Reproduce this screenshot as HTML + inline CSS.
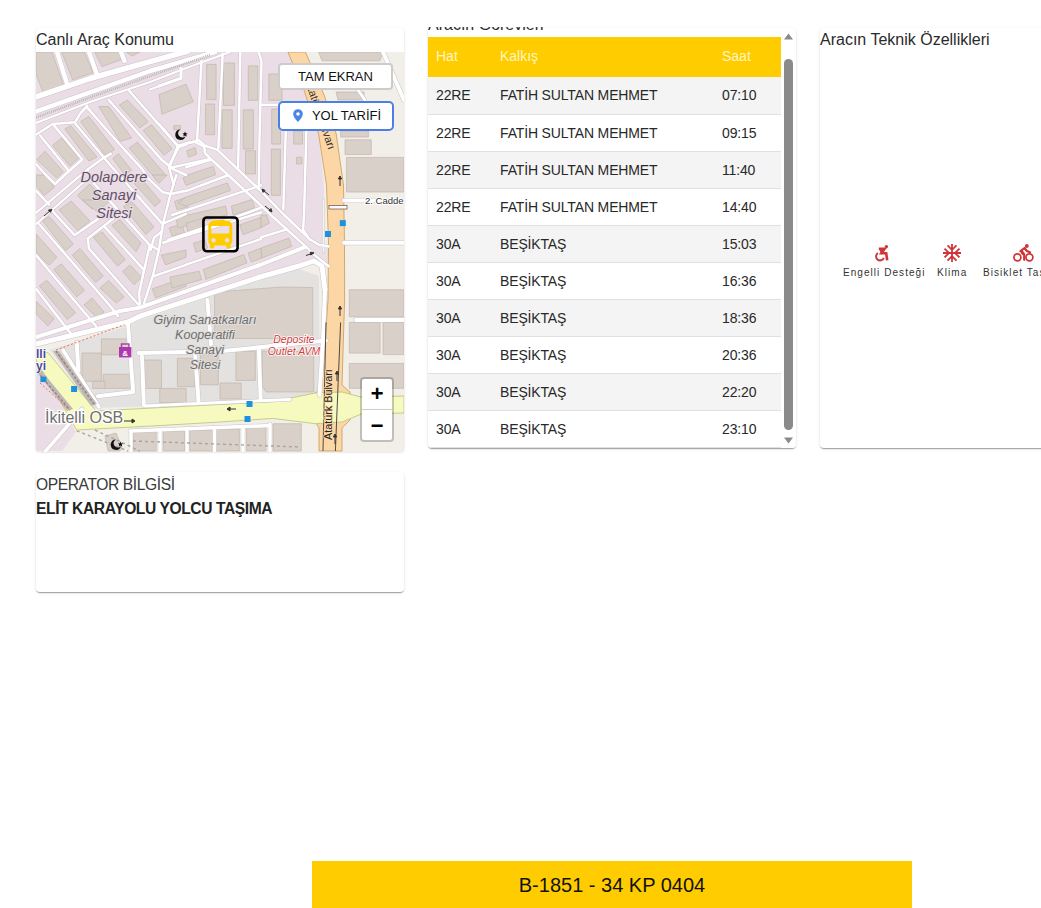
<!DOCTYPE html>
<html><head><meta charset="utf-8">
<style>
*{box-sizing:border-box;margin:0;padding:0}
html,body{width:1041px;height:908px;overflow:hidden;background:#fff;font-family:"Liberation Sans",sans-serif;color:rgba(0,0,0,.87)}
.card{position:absolute;background:#fff;border-radius:4px;box-shadow:0 2px 1px -1px rgba(0,0,0,.2),0 1px 1px 0 rgba(0,0,0,.14),0 1px 3px 0 rgba(0,0,0,.12);overflow:hidden}
.ttl{position:absolute;font-size:16px;white-space:nowrap;color:#2a2a2a}
#c1{left:36px;top:28px;width:368px;height:423px;overflow:visible}
#map{position:absolute;left:0;top:24px;width:368px;height:400px;overflow:hidden;background:#ebdbe8}
#c2{left:428px;top:28px;width:368px;height:420px}
#c3{left:820px;top:28px;width:368px;height:420px}
#c4{left:36px;top:472px;width:368px;height:120px}
table{border-collapse:collapse;position:absolute;left:0;top:9px;width:353px;font-size:14px}
th{background:#ffcc00;color:#fff6c0;font-weight:normal;text-align:left;height:40px;padding:0 0 2px 8px}
td{height:37px;padding:0 0 0 8px;border-bottom:1px solid #e0e0e0;color:#282828;letter-spacing:-.15px}
td:nth-child(2){padding-left:9px}
tr.o td{background:#f4f4f4}
.sb{position:absolute;left:353px;top:0;width:15px;height:420px;background:#fff}
.feat{position:absolute;top:216px;font-size:10px;letter-spacing:1.05px;color:#333;white-space:nowrap}
.btn{position:absolute;background:#fff;border-radius:4px;font-size:13px;color:#111;text-align:center}
#bar{position:absolute;left:312px;top:861px;width:600px;height:60px;background:#ffcc00;font-size:20px;color:#111;text-align:center;line-height:48px}
</style></head><body>

<div class="card" id="c1">
  <div class="ttl" style="left:0;top:3px">Canlı Araç Konumu</div>
  <div id="map">
    <svg id="msvg" width="368" height="400" viewBox="36 52 368 400" style="position:absolute;left:0;top:0">
<defs>
<style>
.b{fill:#d9d0c9;stroke:#c3b6ab;stroke-width:.7}
.w{fill:none;stroke:#fff;stroke-linecap:round;stroke-linejoin:round}
.lbl{font-family:"Liberation Sans",sans-serif;font-style:italic}
</style>
</defs>
<rect x="36" y="52" width="368" height="400" fill="#f2efe9"/>
<!-- industrial pink -->
<path d="M36 52H289L304 90L318.6 134L324 185L324 245L322 256L300 262L260 275L140 315L128 320L36 342Z" fill="#ebdde6"/>
<!-- gray area -->
<path d="M50 350L128 326L140 320L260 280L299 269L318.8 276.1L320 398L282 401L159 406L93 408Z" fill="#e3e2e1"/>
<!-- pink bottom-left -->
<path d="M36 360L76 432L62 451H36Z" fill="#ebdde6"/>
<!-- road D pedestrian fill -->
<path d="M198.4 140L205 145.8L217.4 149.9L261 191.2L284.1 215L310.6 239.8L318.8 244.7L328.7 246.4L328.7 266.2L313.9 254.6L305.6 246.4L270.9 215L261 205.3L210.8 159L205 153.2L204.2 146.6L194.3 141.7L186 143.3Z" fill="#eae0e6"/>

<!-- ===== buildings ===== -->
<g class="b">
<!-- top strip -->
<path d="M36 52H52L63.8 85.7L43.3 93L36 74Z"/>
<path d="M61.6 52H84.3L93.1 72.5L72.6 79.8Z"/>
<path d="M94.6 52H119.5L122.4 59.3L101.9 66.6Z"/>
<path d="M126 52H140L132 56Z"/>
<!-- left region block 1 -->
<path d="M52.5 145.4L61.6 138L79 157.8L69.9 166.1Z"/>
<path d="M64.9 128.9L70.7 125.6L97.1 157L88.9 161.1Z"/>
<path d="M80.6 121.5L88.9 116.5L114.5 149.6L105.4 155.3Z"/>
<path d="M98.8 106.6L108.7 106.6L131.8 138L120.3 141.3Z"/>
<path d="M36.8 159.5L45.1 151.2L63.3 171.9L56.6 178Z"/>
<path d="M119.3 105L127.5 100L148.2 121.5L139.9 128.1Z"/>

<path d="M143.2 130.6L151.5 124.8L172.1 148.7L163.9 155.3Z"/>
<path d="M129.2 147.9L137.4 142.1L165.5 175L157.3 181Z"/>
<path d="M112.7 158.6L118.4 153.7L131.6 170.2L125 175Z"/>
<path d="M159 94.5L186.1 84.2L193.4 101.8L161.9 114.2Z"/>
<path d="M173.8 125.6H180.4V129.7H173.8Z"/>
<!-- left region block 2 -->
<path d="M36 175H46L54.2 187.4L44.3 195.6L36 186Z"/>
<path d="M42.6 221L49.2 216.5L73.4 244L65.7 250.7Z"/>
<path d="M59.1 209.9L71.2 201.1L90 221L77.8 230.8Z"/>
<path d="M77.3 195.6L89.7 184.1L104 199L92 209Z"/>
<path d="M36 234.1L56.9 257.3L49.2 265L36 252.9Z"/>
<path d="M72.3 255L80 248.5L103.2 276L95.5 282.6Z"/>
<path d="M53.6 269.4L61.3 263.9L84.5 290.3L76.7 296.9Z"/>
<path d="M93.3 237.4L102.1 231.9L125.2 259.5L117.5 266.1Z"/>
<path d="M99.9 288.1L108.7 280.4L124.1 296.9L116.4 303Z"/>
<path d="M39.3 285.9L47 280.4L75.6 312.8L67.4 319.4Z"/>
<path d="M122.6 271.5L130 264.9L141.6 277.3L134.1 284.7Z"/>
<path d="M112 225.3L119.7 219.8L141 243L136 251.8Z"/>
<path d="M82.3 200H110.9L97.7 212Z"/>
<path d="M134.1 183.3L142.4 180L160.6 201.4L154.8 206.4Z"/>
<path d="M123.4 206.4L131.6 201.4L154 227L145.7 234.5Z"/>
<path d="M152.3 175H167.2L158.9 183.3Z"/>
<path d="M174.6 201.4L186 197.3L188 207L177 209.7Z"/>
<path d="M169.2 227.9L182 223.7L184.5 232.8L172.1 236.1Z"/>
<path d="M36 301.2L54.2 318.6L48 326L36 314Z"/>
<path d="M161.4 255L186 250L186 257.4L165.5 264.9Z"/>
<path d="M152.3 288.8L186 277.3L186 286.3L155.6 297.9Z"/>
<path d="M84 305L92 298L104 312L97 318Z"/>
<!-- triangle -->
<path d="M186.8 150.7L195.1 147.4L196.7 154L188.5 157.3Z"/>
<path d="M186 175.5L213.3 166.4L215.7 174.7L186 185.4L183 178Z"/>
<path d="M186 197L227.3 183L230.6 190.4L186 206.1L178 203Z"/>
<path d="M231.4 206.1L252.1 199.5L254.6 207.7L233.1 215Z"/>
<path d="M176 218L225.6 206.1L227.3 215L178 228Z"/>
<path d="M186 223.3L202.5 218.3L205 226.6L187.7 231.5Z"/>
<path d="M239.7 224.9L261 217.5L262 227.4L243 234.8Z"/>
<path d="M193.4 243.1L205 239.8L207.5 248L195.9 252.2Z"/>
<path d="M203.3 269.5L243.8 254.6L247.1 262.9L205.8 279.4Z"/>
<path d="M170 277L199.2 271.2L201.7 279.4L172 288Z"/>
<path d="M248 253L261 248L262 258L251.3 262.1Z"/>
<path d="M261 248L289.1 238.1L291.6 246.4L262 258Z"/>
<path d="M261 215L266.8 215L269.3 223.3L261 227.4Z"/>
<!-- T2 tall narrow buildings -->
<path d="M206.6 64.4H216.1V99.6H206.6Z"/>
<path d="M205.6 104H214.6V134.7H205.6Z"/>
<path d="M223.4 63H234.4V105.4H223.4Z"/>
<path d="M222 109.8H232.2V148.3H222Z"/>
<path d="M248.3 65.9H257.8V100.3H248.3Z"/>
<path d="M243.2 109.8H253.4V149H243.2Z"/>
<path d="M245.5 150.7H255.4V173.9H245.5Z"/>
<path d="M271.7 109.1H280.5V144.1H271.7Z"/>
<path d="M271.3 149.1H280.4V195.3H271.3Z"/>
<path d="M268.8 74H282V100.3H268.8Z"/>
<path d="M293.7 131H302.5V144.1H293.7Z"/>
<path d="M296.5 157.3H301.9V164H296.5Z"/>
<!-- right of orange road -->
<path d="M318.6 52H383L380 60.8H322Z"/>
<path d="M345 139.8H371.3V154.5H345Z"/>
<path d="M336 92H364V100H338Z"/>
<path d="M346.4 157.4H404V192H346.4Z"/>
<path d="M349.3 289.7H404V316.8H349.3Z"/>
<path d="M349.3 322.4H380.1V353.1H349.3Z"/>
<path d="M383 322.4H404V354.6H383Z"/>
<path d="M349.3 363.4H404V388.3H349.3Z"/>
<!-- gray area buildings -->
<path d="M214.6 292L282 287L312.7 287.5L312.7 338.5L214.6 338.5Z"/>
<path d="M262.4 351.3H313.7V391.9H266L262.4 386Z"/>
<path d="M235.9 351.3H255.3V380.4H235.9Z"/>
<path d="M220 383H241.2V399H220Z"/>
<path d="M82 353H101.4V381.3H82Z"/>
<path d="M101.4 338.9H127.9V354.8H101.4Z"/>
<path d="M103.2 374.2H131.4V388.4H103.2Z"/>
<path d="M92.6 381.3H105V388.4H92.6Z"/>
<path d="M143.8 360H161.5V388.4H143.8Z"/>
<path d="M159.7 388.4H186.2V402.5H159.7Z"/>
<path d="M177.4 358.3H195V386.6H177.4Z"/>
<path d="M200.4 354.6H218.3V384.8H200.4Z"/>
<!-- below yellow road -->
<path d="M133.2 430.8H156.2V451H133.2Z"/>
<path d="M163.3 430.8H184.5V451H163.3Z"/>
<path d="M189.8 430H212.7V451H189.8Z"/>
<path d="M216.3 429H239.4V451H216.3Z"/>
<path d="M246.5 427.3H266V451H246.5Z"/>
<path d="M273 423.7H301.3V451H273Z"/>
<path d="M105 436L116 433L122 447L120 451H108Z"/>
<path d="M340.6 131H368.4V137H340.6Z"/>
</g>

<!-- orange primary road -->
<path d="M287.9 52L304 90L318.6 134L326.5 185L328.5 243L328 300L321.6 388L314 394L314 420L319 428L319 451H342L342 428L350 420V392L342 385L344.6 300L344.5 243L343.5 185L336.2 134L324.5 96L305.4 52Z" fill="#fcd6a4" stroke="#c89a5a" stroke-width=".8"/>
<!-- yellow secondary road -->
<path d="M36 350L48.4 353L96 411L159 407.7L220 404.5L273 401.7L315.4 393L342 392L361.4 397.2L404 396V413L361.4 414L342 422L315.4 423.7L273 418.4L220 422L159 425.6L76.7 430L36 360Z" fill="#f7fabf" stroke="#b9c27a" stroke-width=".8"/>

<!-- white roads -->
<g class="w" style="stroke:#cbc3c6">
<path d="M36 97L90 78.5L150 61.7L188 51" stroke-width="6.50"/>
<path d="M57 52L66.5 82M89 52L96.5 73.5M121 52L124.5 61" stroke-width="5.50"/>
<path d="M36 111.5L90 92.3L150 71L181 62L215 52" stroke-width="5.50"/>
<path d="M36 123L90 102L150 82L181 70L200 63L230 52" stroke-width="3.20"/>
<path d="M181 69.3V78L150 89.5" stroke-width="3.20"/>

<path d="M87.2 105.8L80.6 113.2L74.8 122.3L52.5 124L36 134.7" stroke-width="3.50"/>
<path d="M54.2 125.6L82.3 159.5L69 171L55 184L45.9 175L36 164" stroke-width="3.50"/>
<path d="M75.6 124L111 166L162.2 223.7" stroke-width="3.50"/>
<path d="M40.1 135.5L69 171" stroke-width="3.50"/>
<path d="M86.4 106.6L111 134.7L142.4 169.4L148.2 178.3L163 192.3L170.5 194L186 190.7" stroke-width="3.50"/>
<path d="M85.6 171L103.7 157.8L111 153.7" stroke-width="3.50"/>
<path d="M128.5 90L178.7 147.1L186 144.6" stroke-width="3.50"/>
<path d="M111 102.5L162.2 160.3L173.8 169.4L186 175" stroke-width="3.50"/>
<path d="M108.7 100L111 102.5M178.7 147.1L168.8 166.1" stroke-width="3.50"/>
<path d="M36 213L79 176.7L88 170" stroke-width="3.20"/>
<path d="M36 224.2L82.3 183.3L92 176" stroke-width="3.20"/>
<path d="M36 190.7L49.2 204.7" stroke-width="3.50"/>
<path d="M52.5 211L74.5 235.2L99.9 217.6L111 216.3" stroke-width="3.50"/>
<path d="M87.8 238.5L113 218.7" stroke-width="3.50"/>
<path d="M39.3 224.2L111 307L118 316" stroke-width="3.50"/>
<path d="M36 255L88.9 317.7L96 326" stroke-width="3.50"/>
<path d="M36 288.8L64.1 325L72 335" stroke-width="3.50"/>
<path d="M87.8 238.5L88.9 248.5L138.3 304.5" stroke-width="3.50"/>
<path d="M104.3 226.4L144 269.8" stroke-width="3.50"/>
<path d="M93.8 183.3L149.8 245.2L158.9 250" stroke-width="3.50"/>
<path d="M176.3 175L170.5 194L163 223.7L158.9 250L153.1 274.8L144 303.7" stroke-width="3.50"/>
<path d="M149.8 245.2L144 270.6L139.1 293L139.9 304.5" stroke-width="3.50"/>
<path d="M163 223.7L186 213.8M163 242.7L186 235.3" stroke-width="3.50"/>
<path d="M162.2 231.2L154 237.8L150.6 250" stroke-width="3.50"/>
<path d="M153.1 276.4L186 264.9" stroke-width="3.50"/>
<path d="M36 344L128 322L140 316.2L260 277L299 266L314 261L322 266L325 290" stroke-width="6.00"/>
<path d="M36 337L120 311L140 307.6L260 265L304.8 247.2" stroke-width="5.00"/>

<!-- triangle region -->
<path d="M198.4 140L205 145.8L217.4 149.9L261 191.2L284.1 215L310.6 239.8L318.8 244.7L328.7 246.4" stroke-width="3.50"/>
<path d="M186 143.3L194.3 141.7L204.2 146.6L205 153.2L210.8 159L261 205.3L270.9 215L305.6 246.4L313.9 254.6L328.7 266.2" stroke-width="3.50"/>
<path d="M186 167.3L210.8 159.8M186 191.2L227.3 175.5M172 215L246.3 190.4L261 185.4M168 240L245.5 213.5L261 207.7M186 235.6L261 212.5M186 264.6L261 239M261 237.3L285 229.9" stroke-width="3.50"/>
<path d="M201.5 60.8L197.1 139.8L198.4 140M222.7 53.5L218.3 148.6M240.3 52L238.1 169.1M258.6 52L261.5 60.8L259.5 140L258.7 188.7M261.5 104.7H282" stroke-width="3.50"/>
<path d="M285.8 131L283.3 209.4M306.4 131L304 215L303.1 229.9L310 240" stroke-width="3.50"/>
<path d="M159 123.7L178 145.7L197 141M178 145.7L169.2 167.7L173.6 185M170.7 167.7L210.2 158.9" stroke-width="3.50"/>
<path d="M181 68V78.4L159 86" stroke-width="4.00"/>
<path d="M323.5 200V252" stroke-width="3.00"/>
<!-- right side -->
<path d="M344 200.5H404M344 242.8H404M383 52L404 100.3M356 320H404" stroke-width="5.00"/>
<path d="M358 90L365 100" stroke-width="4.00"/>
<!-- gray area roads -->
<path d="M127.9 323L133.2 391.9L97.9 396.3M76.7 342.4L78.4 370.7" stroke-width="5.00"/>
<path d="M63 350L99 407" stroke-width="4.50"/>
<path d="M142 356.6L143.8 404.3M138.5 353L220 351.3L326 340.6M195 351.3L198.6 402.5M207.4 300L211 344M258.9 349.5L260.6 399M325 290L323 340L319.5 395" stroke-width="5.00"/>
<path d="M143.8 406L220 402.5L290 399.5" stroke-width="4.00"/>
<path d="M44 453L82 409M130 431L270 425.5M131 431V451M160 431V451M187 430V451M214.5 429V451M243 428V451M270 424V451" stroke-width="4.50"/>
</g>
<g class="w">
<path d="M36 97L90 78.5L150 61.7L188 51" stroke-width="5.5"/>
<path d="M57 52L66.5 82M89 52L96.5 73.5M121 52L124.5 61" stroke-width="4.5"/>
<path d="M36 111.5L90 92.3L150 71L181 62L215 52" stroke-width="4.5"/>
<path d="M36 123L90 102L150 82L181 70L200 63L230 52" stroke-width="2.2"/>
<path d="M181 69.3V78L150 89.5" stroke-width="2.2"/>

<path d="M87.2 105.8L80.6 113.2L74.8 122.3L52.5 124L36 134.7" stroke-width="2.5"/>
<path d="M54.2 125.6L82.3 159.5L69 171L55 184L45.9 175L36 164" stroke-width="2.5"/>
<path d="M75.6 124L111 166L162.2 223.7" stroke-width="2.5"/>
<path d="M40.1 135.5L69 171" stroke-width="2.5"/>
<path d="M86.4 106.6L111 134.7L142.4 169.4L148.2 178.3L163 192.3L170.5 194L186 190.7" stroke-width="2.5"/>
<path d="M85.6 171L103.7 157.8L111 153.7" stroke-width="2.5"/>
<path d="M128.5 90L178.7 147.1L186 144.6" stroke-width="2.5"/>
<path d="M111 102.5L162.2 160.3L173.8 169.4L186 175" stroke-width="2.5"/>
<path d="M108.7 100L111 102.5M178.7 147.1L168.8 166.1" stroke-width="2.5"/>
<path d="M36 213L79 176.7L88 170" stroke-width="2.2"/>
<path d="M36 224.2L82.3 183.3L92 176" stroke-width="2.2"/>
<path d="M36 190.7L49.2 204.7" stroke-width="2.5"/>
<path d="M52.5 211L74.5 235.2L99.9 217.6L111 216.3" stroke-width="2.5"/>
<path d="M87.8 238.5L113 218.7" stroke-width="2.5"/>
<path d="M39.3 224.2L111 307L118 316" stroke-width="2.5"/>
<path d="M36 255L88.9 317.7L96 326" stroke-width="2.5"/>
<path d="M36 288.8L64.1 325L72 335" stroke-width="2.5"/>
<path d="M87.8 238.5L88.9 248.5L138.3 304.5" stroke-width="2.5"/>
<path d="M104.3 226.4L144 269.8" stroke-width="2.5"/>
<path d="M93.8 183.3L149.8 245.2L158.9 250" stroke-width="2.5"/>
<path d="M176.3 175L170.5 194L163 223.7L158.9 250L153.1 274.8L144 303.7" stroke-width="2.5"/>
<path d="M149.8 245.2L144 270.6L139.1 293L139.9 304.5" stroke-width="2.5"/>
<path d="M163 223.7L186 213.8M163 242.7L186 235.3" stroke-width="2.5"/>
<path d="M162.2 231.2L154 237.8L150.6 250" stroke-width="2.5"/>
<path d="M153.1 276.4L186 264.9" stroke-width="2.5"/>
<path d="M36 344L128 322L140 316.2L260 277L299 266L314 261L322 266L325 290" stroke-width="5"/>
<path d="M36 337L120 311L140 307.6L260 265L304.8 247.2" stroke-width="4"/>

<!-- triangle region -->
<path d="M198.4 140L205 145.8L217.4 149.9L261 191.2L284.1 215L310.6 239.8L318.8 244.7L328.7 246.4" stroke-width="2.5"/>
<path d="M186 143.3L194.3 141.7L204.2 146.6L205 153.2L210.8 159L261 205.3L270.9 215L305.6 246.4L313.9 254.6L328.7 266.2" stroke-width="2.5"/>
<path d="M186 167.3L210.8 159.8M186 191.2L227.3 175.5M172 215L246.3 190.4L261 185.4M168 240L245.5 213.5L261 207.7M186 235.6L261 212.5M186 264.6L261 239M261 237.3L285 229.9" stroke-width="2.5"/>
<path d="M201.5 60.8L197.1 139.8L198.4 140M222.7 53.5L218.3 148.6M240.3 52L238.1 169.1M258.6 52L261.5 60.8L259.5 140L258.7 188.7M261.5 104.7H282" stroke-width="2.5"/>
<path d="M285.8 131L283.3 209.4M306.4 131L304 215L303.1 229.9L310 240" stroke-width="2.5"/>
<path d="M159 123.7L178 145.7L197 141M178 145.7L169.2 167.7L173.6 185M170.7 167.7L210.2 158.9" stroke-width="2.5"/>
<path d="M181 68V78.4L159 86" stroke-width="3"/>
<path d="M323.5 200V252" stroke-width="2" stroke="#f6f3f0"/>
<!-- right side -->
<path d="M344 200.5H404M344 242.8H404M383 52L404 100.3M356 320H404" stroke-width="4"/>
<path d="M358 90L365 100" stroke-width="3"/>
<!-- gray area roads -->
<path d="M127.9 323L133.2 391.9L97.9 396.3M76.7 342.4L78.4 370.7" stroke-width="4"/>
<path d="M63 350L99 407" stroke-width="3.5"/>
<path d="M142 356.6L143.8 404.3M138.5 353L220 351.3L326 340.6M195 351.3L198.6 402.5M207.4 300L211 344M258.9 349.5L260.6 399M325 290L323 340L319.5 395" stroke-width="4"/>
<path d="M143.8 406L220 402.5L290 399.5" stroke-width="3"/>
<path d="M44 453L82 409M130 431L270 425.5M131 431V451M160 431V451M187 430V451M214.5 429V451M243 428V451M270 424V451" stroke-width="3.5"/>
</g>


<!-- orange dividers -->
<path d="M326 322.4L323 451M340.6 322.4L335.4 451" stroke="#3a3a3a" stroke-width=".9" fill="none"/>
<!-- platform along yellow diagonal -->
<path d="M53 351L59 351L97 404L91 406Z" fill="#bfb7b4"/>
<path d="M36 371L41 370L73 409L67 411Z" fill="#bfb7b4"/>
<path d="M56 351L94 404" stroke="#8d8582" stroke-width="1.4" stroke-dasharray="2.5 2" fill="none"/>
<path d="M37.5 372L70 410" stroke="#8d8582" stroke-width="1.4" stroke-dasharray="2.5 2" fill="none"/>
<path d="M56 350L124.4 324.7M58 354L66 366M40 383L70 410" stroke="#e8705a" stroke-width="1" stroke-dasharray="2 2" fill="none"/>
<!-- railway dashes below yellow -->
<path d="M76.7 430.8L128 451M95 430L140 451M133 441L300 447" stroke="#a9a4a0" stroke-width="1.4" stroke-dasharray="3 3" fill="none"/>
<!-- railway hatched top -->
<path d="M36 117.5L90 97.5L150 76L210 55" stroke="#bdb5b8" stroke-width="2.6" stroke-dasharray="1 1" fill="none"/>
<!-- blue bus stops -->
<g fill="#1e90dd">
<rect x="40.4" y="376.6" width="6" height="5.5"/>
<rect x="71.1" y="386" width="6" height="6"/>
<rect x="339.8" y="220.1" width="6" height="6"/>
<rect x="325" y="231" width="6" height="6"/>
<rect x="246.5" y="401" width="6" height="6"/>
<rect x="244.5" y="416" width="6" height="6"/>
</g>

<!-- labels -->
<g class="lbl" font-size="14.5" text-anchor="middle" fill="#5f5066" stroke="#ebdde6" stroke-width="2" paint-order="stroke">
<text x="114" y="182">Dolapdere</text>
<text x="114" y="200">Sanayi</text>
<text x="114" y="218">Sitesi</text>
</g>
<g class="lbl" font-size="12.5" text-anchor="middle" fill="#6e6e6e" stroke="#e1dedc" stroke-width="2" paint-order="stroke">
<text x="205" y="324">Giyim Sanatkarları</text>
<text x="205" y="339">Kooperatifi</text>
<text x="205" y="354">Sanayi</text>
<text x="205" y="369">Sitesi</text>
</g>
<g class="lbl" font-size="10.5" fill="#d03a3a" text-anchor="middle" stroke="#fff" stroke-width="1.5" paint-order="stroke">
<text x="294" y="343">Deposite</text>
<text x="294" y="355">Outlet AVM</text>
</g>
<text x="45" y="423" font-family="Liberation Sans" font-size="16" fill="#707070" stroke="#fff" stroke-width="2.5" paint-order="stroke">İkitelli OSB</text>
<text x="365" y="204" font-family="Liberation Sans" font-size="9.5" fill="#333" stroke="#fff" stroke-width="2" paint-order="stroke">2. Cadde</text>
<text transform="translate(331.8 440) rotate(-90)" font-family="Liberation Sans" font-size="10.8" fill="#222" stroke="#fcd6a4" stroke-width="1.5" paint-order="stroke">Atatürk Bulvarı</text>
<text transform="translate(305 82) rotate(71)" font-family="Liberation Sans" font-size="11" fill="#333" stroke="#fcd6a4" stroke-width="1.5" paint-order="stroke">Atatürk Bulvarı</text>
<g font-family="Liberation Sans" font-weight="bold" font-size="12" fill="#4a4a9a" stroke="#fff" stroke-width="1.5" paint-order="stroke">
<text x="46" y="358" text-anchor="end">olli</text>
<text x="46" y="370" text-anchor="end">ayi</text>
</g>
<!-- mosque icons -->
<g fill="#111">
<path d="M180.5 129.5a5.2 5.2 0 1 0 5 6.5a4.2 4.2 0 1 1 -5 -6.5z"/>
<path d="M185 131.5l.8 1.7 1.8.2-1.3 1.2.4 1.8-1.7-.9-1.6.9.3-1.8-1.3-1.2 1.8-.2z"/>
<path d="M116 439.5a5.2 5.2 0 1 0 5 6.5a4.2 4.2 0 1 1 -5 -6.5z"/>
<path d="M120.5 441.5l.8 1.7 1.8.2-1.3 1.2.4 1.8-1.7-.9-1.6.9.3-1.8-1.3-1.2 1.8-.2z"/>
</g>
<!-- shop icon -->
<rect x="119" y="347" width="12.4" height="10.4" fill="#ac39ac"/>
<rect x="121.5" y="344" width="7.4" height="4" fill="none" stroke="#ac39ac" stroke-width="1.4"/>
<text x="125.2" y="355.6" font-family="Liberation Sans" font-weight="bold" font-size="8" fill="#fff" text-anchor="middle">&amp;</text>
<!-- arrows -->
<g stroke="#333" stroke-width="1" fill="#333">
<path d="M44 216L50 211" fill="none"/><path d="M52 209.5l-3.6 .6 2 2.2z"/>
<path d="M229 409H236" fill="none"/><path d="M227 409l3-2v4z"/>
<path d="M306 255.5L312 253.5" fill="none"/><path d="M314 253l-3.4-1v3z"/>
<path d="M338.5 115V122" fill="none"/><path d="M338.5 125l-1.6-3h3.2z"/>
<path d="M340 186V179" fill="none"/><path d="M340 176l-1.6 3h3.2z"/>
<path d="M340 316V309" fill="none"/><path d="M340 306l-1.6 3h3.2z"/>
<path d="M337 381V374" fill="none"/><path d="M337 371l-1.6 3h3.2z"/>
<path d="M335 444V437" fill="none"/><path d="M335 434l-1.6 3h3.2z"/>
<path d="M264 191L269 195" fill="none"/><path d="M262 189l1 3.4 2-2z"/>
<path d="M265 206L270 210" fill="none"/><path d="M272 212l-1-3.4-2 2z"/>
<path d="M124 421H132" fill="none"/><path d="M135 421l-3-2v4z"/>
</g>
<!-- pedestrian crossing -->
<rect x="329" y="205.5" width="18" height="3.5" fill="#fff" stroke="#6a4a3a" stroke-width=".7"/>
<!-- bus marker -->
<rect x="203.4" y="217.5" width="34.2" height="33.8" rx="3.5" fill="none" stroke="#000" stroke-width="2.6"/>
<path transform="translate(202.3 217) scale(1.5)" fill="#ffcc00" d="M4 16c0 .88.39 1.67 1 2.22V20c0 .55.45 1 1 1h1c.55 0 1-.45 1-1v-1h8v1c0 .55.45 1 1 1h1c.55 0 1-.45 1-1v-1.78c.61-.55 1-1.34 1-2.22V6c0-3.5-3.58-4-8-4s-8 .5-8 4v10zm3.5 1c-.83 0-1.5-.67-1.5-1.5S6.670 14 7.5 14s1.5.67 1.5 1.5S8.33 17 7.5 17zm9 0c-.83 0-1.5-.67-1.5-1.5s.67-1.5 1.5-1.5 1.5.67 1.5 1.5-.67 1.5-1.5 1.5zm1.5-6H6V6h12v5z"/>
</svg>
    <div class="btn" style="left:242px;top:11px;width:115px;height:27px;border:2px solid rgba(0,0,0,.2);line-height:23px">TAM EKRAN</div>
    <div class="btn" style="left:242px;top:49px;width:116px;height:30px;border:2px solid #4a80e6;border-radius:5px;line-height:26px;padding-left:21px">YOL TARİFİ<svg style="position:absolute;left:12.5px;top:6px" width="10" height="13" viewBox="0 0 11 14"><path d="M5.5 0A5.3 5.3 0 0 0 .2 5.3C.2 9 5.5 14 5.5 14S10.8 9 10.8 5.3A5.3 5.3 0 0 0 5.5 0Zm0 7.3a2 2 0 1 1 0-4 2 2 0 0 1 0 4Z" fill="#4a86e8"/></svg></div>
    <div style="position:absolute;left:324px;top:325px;width:34px;height:65px;border:2px solid rgba(0,0,0,.2);border-radius:4px;background:#fff;background-clip:padding-box">
      <div style="height:31px;border-bottom:1px solid #ccc;font:bold 22px 'Liberation Mono',monospace;text-align:center;line-height:33px;color:#000">+</div>
      <div style="height:30px;font:bold 22px 'Liberation Mono',monospace;text-align:center;line-height:35px;color:#000">−</div>
    </div>
  </div>
</div>

<div style="position:absolute;left:428px;top:26.5px;width:368px;height:4.5px;overflow:hidden;z-index:2"><div class="ttl" style="left:0;top:-9.3px;line-height:16px">Aracın Görevleri</div></div>
<div class="card" id="c2">
  <table>
    <tr><th style="width:63px">Hat</th><th style="width:223px;padding-left:9px">Kalkış</th><th style="width:67px">Saat</th></tr>
    <tr class="o"><td>22RE</td><td>FATİH SULTAN MEHMET</td><td>07:10</td></tr>
    <tr><td>22RE</td><td>FATİH SULTAN MEHMET</td><td>09:15</td></tr>
    <tr class="o"><td>22RE</td><td>FATİH SULTAN MEHMET</td><td>11:40</td></tr>
    <tr><td>22RE</td><td>FATİH SULTAN MEHMET</td><td>14:40</td></tr>
    <tr class="o"><td>30A</td><td>BEŞİKTAŞ</td><td>15:03</td></tr>
    <tr><td>30A</td><td>BEŞİKTAŞ</td><td>16:36</td></tr>
    <tr class="o"><td>30A</td><td>BEŞİKTAŞ</td><td>18:36</td></tr>
    <tr><td>30A</td><td>BEŞİKTAŞ</td><td>20:36</td></tr>
    <tr class="o"><td>30A</td><td>BEŞİKTAŞ</td><td>22:20</td></tr>
    <tr><td>30A</td><td>BEŞİKTAŞ</td><td>23:10</td></tr>
  </table>
  <div class="sb">
    <div style="position:absolute;left:3px;top:31px;width:9px;height:371px;border-radius:4.5px;background:#8a8a8a"></div>
    <svg style="position:absolute;left:3px;top:5px" width="9" height="7" viewBox="0 0 9 7"><path d="M4.5 0.5L9 6.5H0Z" fill="#8a8a8a"/></svg>
    <svg style="position:absolute;left:3px;top:409px" width="9" height="7" viewBox="0 0 9 7"><path d="M0 0.5H9L4.5 6.5Z" fill="#8a8a8a"/></svg>
  </div>
</div>

<div class="card" id="c3">
  <div class="ttl" style="left:0;top:3px">Aracın Teknik Özellikleri</div>
  <svg style="position:absolute;left:53px;top:216px" width="17" height="18" viewBox="0 0 17 18">
    <circle cx="13.4" cy="2.6" r="1.7" fill="#d13438"/>
    <path d="M5.8 4.8H11.6L8.4 9.2H13.2L14.2 16.4" fill="none" stroke="#d13438" stroke-width="2.6" stroke-linejoin="miter"/><path d="M6 5.5L11 5L8 10L9 11Z" fill="#d13438"/>
    <path d="M5 9A4 4 0 1 0 10.8 13.9" fill="none" stroke="#d13438" stroke-width="1.9"/>
  </svg>
  <div class="feat" style="left:23px;top:239px">Engelli Desteği</div>
  <svg style="position:absolute;left:123px;top:216px" width="18" height="18" viewBox="2 2 20 20">
    <path fill="#d13438" d="M22 11h-4.17l3.24-3.24-1.41-1.42L15 11h-2V9l4.66-4.66-1.42-1.41L13 6.17V2h-2v4.17L7.76 2.93 6.34 4.34 11 9v2H9L4.34 6.34 2.93 7.76 6.17 11H2v2h4.17l-3.24 3.24 1.41 1.42L9 13h2v2l-4.66 4.66 1.42 1.41L11 17.830V22h2v-4.17l3.24 3.24 1.42-1.41L13 15v-2h2l4.66 4.66 1.41-1.42L17.83 13H22z"/>
  </svg>
  <div class="feat" style="left:117px;top:239px">Klima</div>
  <svg style="position:absolute;left:193px;top:216px" width="21" height="18" viewBox="0 0 21 18">
    <g fill="none" stroke="#d13438" stroke-width="1.7">
      <circle cx="4.4" cy="13.3" r="3.5"/><circle cx="16.4" cy="13.3" r="3.5"/>
    </g>
    <circle cx="13.8" cy="2" r="1.9" fill="#d13438"/>
    <path d="M7.5 7.2l4-3.2 2.4 3 3 1.3M9.6 9.3l1.6 1.5v5" fill="none" stroke="#d13438" stroke-width="2.2" stroke-linejoin="round" stroke-linecap="round"/>
    <path d="M8.2 6.8l2.6 3.6" stroke="#d13438" stroke-width="3"/>
  </svg>
  <div class="feat" style="left:163px;top:239px">Bisiklet Taşıma</div>
</div>

<div class="card" id="c4">
  <div class="ttl" style="left:0;top:3.5px;font-size:15.6px;letter-spacing:-.4px;color:#3a3a3a">OPERATOR BİLGİSİ</div>
  <div class="ttl" style="left:0;top:27.5px;font-size:15.6px;font-weight:bold;letter-spacing:-.4px;color:#222">ELİT KARAYOLU YOLCU TAŞIMA</div>
</div>

<div id="bar">B-1851 - 34 KP 0404</div>

</body></html>
